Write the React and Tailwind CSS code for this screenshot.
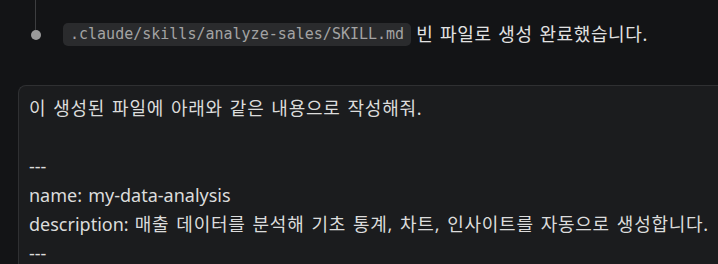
const K = ({ children, wide }) => (
  <span className={wide ? "tracking-[0.75px]" : "tracking-[0.6px]"}>{children}</span>
);

const App = () => {
  return (
    <div className="w-[718px] h-[264px] overflow-hidden bg-[#131416] text-[#dcdcdc] font-['Noto_Sans','Noto_Sans_CJK_KR',sans-serif]">
      {/* Timeline item */}
      <div className="flex h-[70px]">
        <div className="w-[72px] relative shrink-0">
          <div className="absolute left-[35px] top-0 h-[30px] w-px bg-[#3d3e40]" />
          <div className="absolute left-[31px] top-[30px] w-[10px] h-[10px] rounded-full bg-[#9a9a9a]" />
        </div>
        <div className="flex items-start pt-[23px] -ml-[9px] whitespace-nowrap">
          <code className="h-[23px] px-[7px] rounded-[5px] bg-[#2a2b2d] text-[#a3a3a3] text-[15px] leading-[23px] font-['DejaVu_Sans_Mono',monospace]">
            .claude/skills/analyze-sales/SKILL.md
          </code>
          <span className="ml-[5px] text-[18px] leading-[23px] [word-spacing:1.5px] text-[#e2e2e2]">
            <K>빈 파일로 생성 완료했습니다.</K>
          </span>
        </div>
      </div>

      {/* User message panel */}
      <div className="ml-[18px] mt-[15px] rounded-tl-[8px] border-l border-t border-[#2f3032] bg-[#1b1c1e] pl-[10px] pt-[8px] text-[18px] leading-[29px] [word-spacing:1.5px] text-[#dcdcdc] whitespace-nowrap">
        <p><K wide>이 생성된 파일에 아래와 같은 내용으로 작성해줘.</K></p>
        <p>&nbsp;</p>
        <p>---</p>
        <p>name: my-data-analysis</p>
        <p>description: <K wide>매출 데이터를 분석해 기초 통계, 차트, 인사이트를 자동으로 생성합니다.</K></p>
        <p>---</p>
      </div>
    </div>
  );
};

export default App;
